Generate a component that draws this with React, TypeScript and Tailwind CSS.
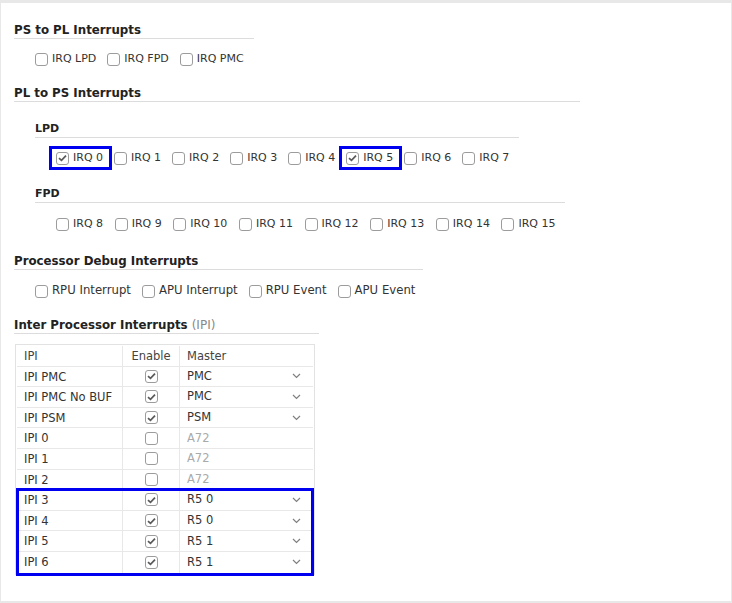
import React, { ReactNode } from "react";

const font = { fontFamily: '"DejaVu Sans", sans-serif' };

const Box = ({ checked }: { checked?: boolean }) => (
  <span className="flex h-[13px] w-[13px] shrink-0 items-center justify-center rounded-[3px] border border-[#9c9c9c] bg-white">
    {checked && (
      <svg width="9" height="8" viewBox="0 0 9 8">
        <path d="M1 4.1 L3.5 6.4 L8 1.6" stroke="#5a5a5a" strokeWidth="1.7" fill="none" />
      </svg>
    )}
  </span>
);

const Check = ({
  label,
  checked,
  marked,
  big,
}: {
  label: string;
  checked?: boolean;
  marked?: boolean;
  big?: boolean;
}) => (
  <label className={`relative flex h-[20px] items-center gap-[4px] text-[#333] ${big ? "text-[11.7px]" : "text-[11px]"}`}>
    <Box checked={checked} />
    <span>{label}</span>
    {marked && <span className="absolute -top-[2px] -bottom-[2px] -left-[7px] -right-[9px] border-[3px] border-[#0000f0]" />}
  </label>
);

const Heading = ({ children, w, size = "top" }: { children: ReactNode; w: string; size?: "top" | "sub" }) => (
  <div
    className={`h-[17px] border-b border-[#dcdcdc] font-bold leading-[16px] text-[#222] ${w} ${
      size === "top" ? "text-[11.8px]" : "text-[11px]"
    }`}
  >
    {children}
  </div>
);

const Chevron = () => (
  <svg width="9" height="6" viewBox="0 0 9 6">
    <path d="M1 1 L4.5 4.5 L8 1" stroke="#808080" strokeWidth="1.2" fill="none" />
  </svg>
);

type IpiRow = { name: string; on: boolean; master: string };

const ipiTop: IpiRow[] = [
  { name: "IPI PMC", on: true, master: "PMC" },
  { name: "IPI PMC No BUF", on: true, master: "PMC" },
  { name: "IPI PSM", on: true, master: "PSM" },
  { name: "IPI 0", on: false, master: "A72" },
  { name: "IPI 1", on: false, master: "A72" },
  { name: "IPI 2", on: false, master: "A72" },
];

const ipiBottom: IpiRow[] = [
  { name: "IPI 3", on: true, master: "R5 0" },
  { name: "IPI 4", on: true, master: "R5 0" },
  { name: "IPI 5", on: true, master: "R5 1" },
  { name: "IPI 6", on: true, master: "R5 1" },
];

const Row = ({ r, last }: { r: IpiRow; last?: boolean }) => (
  <div className={`flex h-[20.6px] items-center text-[11.5px] text-[#333] ${last ? "" : "border-b border-[#e8e8e8]"}`}>
    <div className="h-full w-[106px] border-r border-[#e8e8e8] pl-[7px] leading-[20px]">{r.name}</div>
    <div className="flex h-full w-[57px] items-center justify-center border-r border-[#e8e8e8]">
      <Box checked={r.on} />
    </div>
    <div className="flex h-full flex-1 items-center justify-between pl-[7px] pr-[12px]">
      <span className={r.on ? "text-[#333]" : "text-[#aaa]"}>{r.master}</span>
      {r.on && <Chevron />}
    </div>
  </div>
);

export default function App() {
  return (
    <div style={font} className="h-[603px] w-[732px] bg-[#e8e8e8] pb-[2px] pl-px pr-px pt-[3px]">
      <div className="h-full w-full bg-white pl-[13px] pt-[19px]">
        <Heading w="w-[240px]">PS to PL Interrupts</Heading>
        <div className="mt-[10px] flex gap-[11px] pl-[21px]">
          <Check label="IRQ LPD" />
          <Check label="IRQ FPD" />
          <Check label="IRQ PMC" />
        </div>

        <div className="mt-[16px]">
          <Heading w="w-[566px]">PL to PS Interrupts</Heading>
          <div className="ml-[21px] mt-[19px]">
            <Heading w="w-[484px]" size="sub">LPD</Heading>
            <div className="mt-[10px] flex gap-[11px] pl-[21px]">
              {[0, 1, 2, 3, 4, 5, 6, 7].map((n) => (
                <Check key={n} label={`IRQ ${n}`} checked={n === 0 || n === 5} marked={n === 0 || n === 5} />
              ))}
            </div>
          </div>
          <div className="ml-[21px] mt-[18px]">
            <Heading w="w-[530px]" size="sub">FPD</Heading>
            <div className="mt-[11px] flex gap-[11.6px] pl-[21px]">
              {[8, 9, 10, 11, 12, 13, 14, 15].map((n) => (
                <Check key={n} label={`IRQ ${n}`} />
              ))}
            </div>
          </div>
        </div>

        <div className="mt-[19px]">
          <Heading w="w-[409px]">Processor Debug Interrupts</Heading>
          <div className="mt-[11px] flex gap-[11px] pl-[21px]">
            <Check label="RPU Interrupt" big />
            <Check label="APU Interrupt" big />
            <Check label="RPU Event" big />
            <Check label="APU Event" big />
          </div>
        </div>

        <div className="mt-[16px]">
          <Heading w="w-[305px]">
            Inter Processor Interrupts <span className="text-[12px] font-normal text-[#888]">(IPI)</span>
          </Heading>
          <div className="ml-px mt-[10px] w-[300px] border border-[#e2e2e2] p-px">
            <div className="flex h-[20.6px] items-center border-b border-[#e8e8e8] text-[11.5px] text-[#444]">
              <div className="h-full w-[106px] border-r border-[#e8e8e8] pl-[7px] leading-[20px]">IPI</div>
              <div className="h-full w-[57px] border-r border-[#e8e8e8] text-center leading-[20px]">Enable</div>
              <div className="h-full flex-1 pl-[7px] leading-[20px]">Master</div>
            </div>
            {ipiTop.map((r) => (
              <Row key={r.name} r={r} />
            ))}
            <div className="relative">
              {ipiBottom.map((r, i) => (
                <Row key={r.name} r={r} last={i === ipiBottom.length - 1} />
              ))}
              <span className="absolute -bottom-[3px] -left-px -right-px -top-[2px] border-[3px] border-[#0000f0]" />
            </div>
          </div>
        </div>
      </div>
    </div>
  );
}
